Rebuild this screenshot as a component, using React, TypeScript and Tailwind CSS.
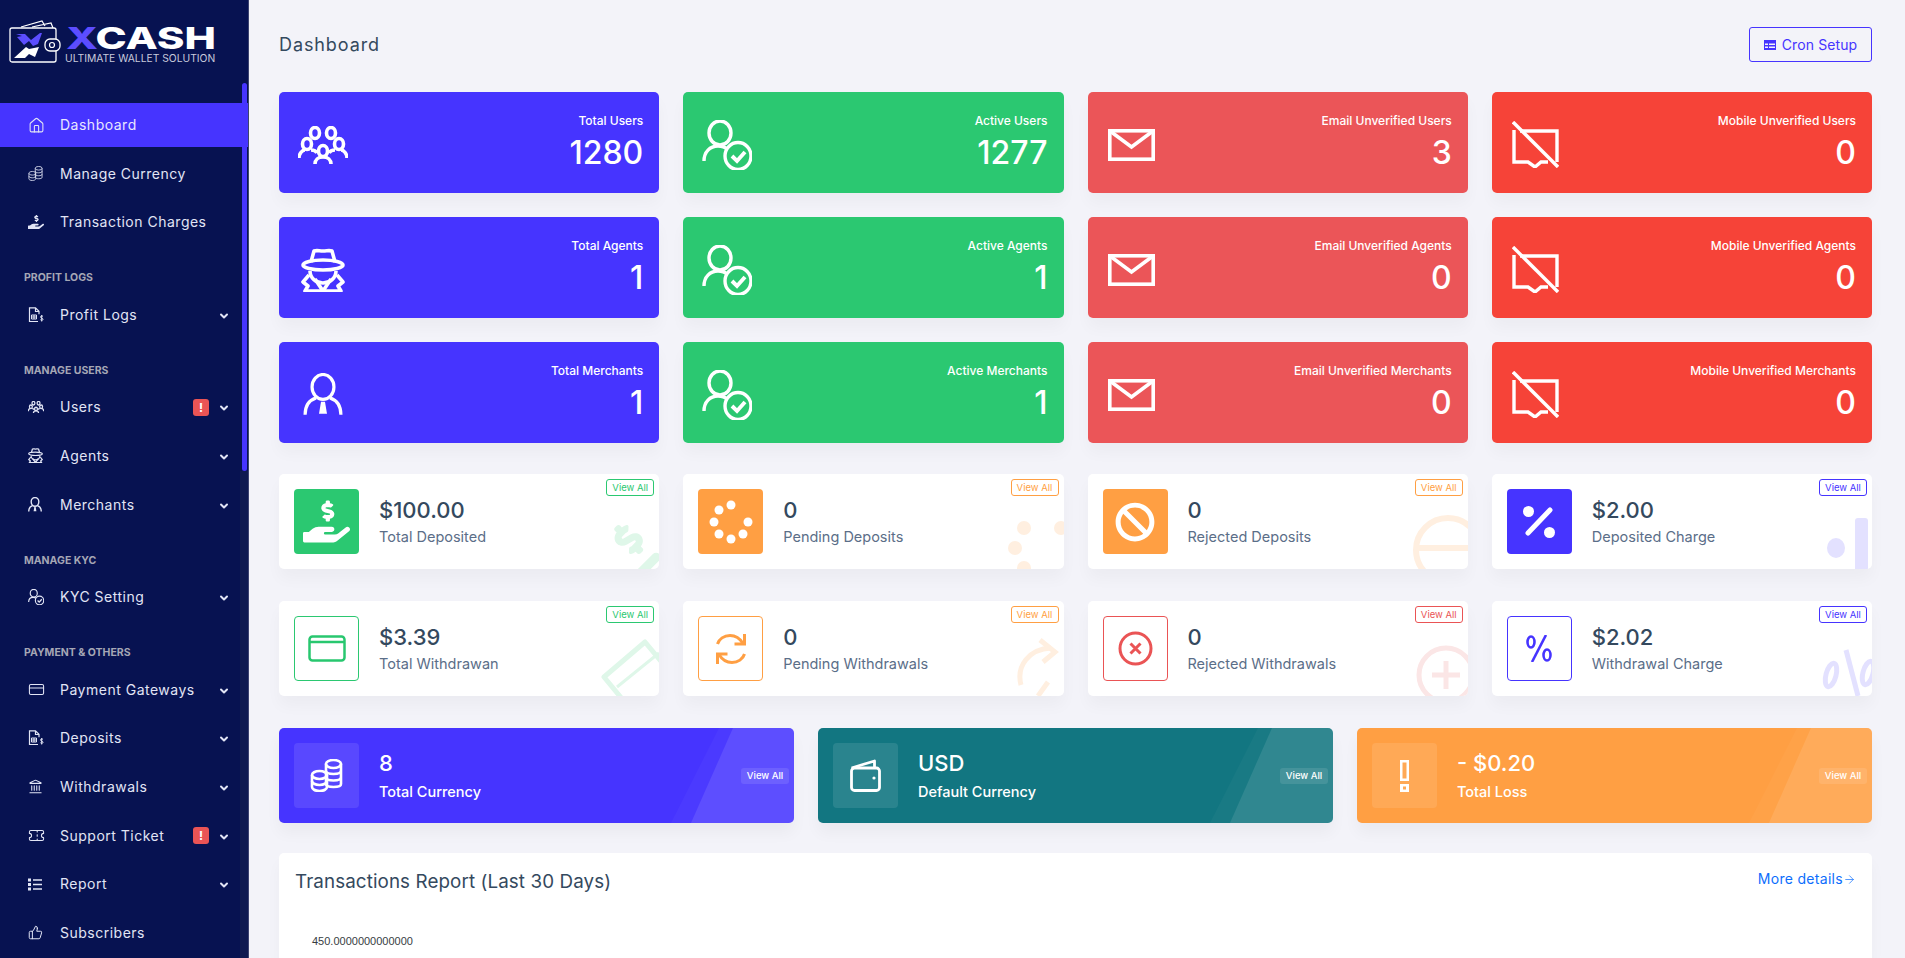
import React from 'react';
import { ChevronDown, CreditCard, House, Landmark, ThumbsUp, Ticket, ArrowRight } from 'lucide-react';
import { FaBan, FaHandHoldingUsd } from 'react-icons/fa';

// Icons drawn by hand, the packages only have solid or differently shaped ones
const GroupIcon = ({ size = 50, sw = 3.6 }: { size?: number; sw?: number }) => (
  <svg width={size} height={size * 0.76} viewBox="0 0 50 38" fill="none" stroke="currentColor" strokeWidth={sw}>
    <ellipse cx="17" cy="7" rx="4.500" ry="5.500" />
    <ellipse cx="33" cy="7" rx="4.500" ry="5.500" />
    <ellipse cx="9" cy="18" rx="4.500" ry="5.500" />
    <ellipse cx="41" cy="18" rx="4.500" ry="5.500" />
    <ellipse cx="25" cy="25" rx="4.500" ry="5.500" />
    <path d="M1 32c0-4 3-8 6-8M49 32c0-4-3-8-6-8M17 38c0-4 3-7 8-7s8 3 8 7M13 24c3 0 5 1 6 3M37 24c-3 0-5 1-6 3" />
  </svg>
);

const UserCheckIcon = ({ size = 50, sw = 3.4 }: { size?: number; sw?: number }) => (
  <svg width={size} height={size} viewBox="0 0 50 50" fill="none" stroke="currentColor" strokeWidth={sw}>
    <ellipse cx="18" cy="13" rx="11" ry="12" />
    <path d="M2 41c0-9 6-15 14-15 4 0 7 1 9 3" />
    <ellipse cx="36" cy="36" rx="13" ry="13.500" />
    <path d="M30 36l5 5 8-9" strokeWidth={sw + 0.5} />
  </svg>
);

const SpyIcon = ({ size = 44, sw = 3.6 }: { size?: number; sw?: number }) => (
  <svg width={size} height={size} viewBox="0 0 44 44" fill="none" stroke="currentColor" strokeWidth={sw} strokeLinejoin="round">
    <path d="M10 14l3-11c3-1 5 0 9 0s6-1 9 0l3 11" />
    <ellipse cx="22" cy="17" rx="20" ry="5" />
    <path d="M9 23c0 7 6 12 13 12s13-5 13-12" />
    <path d="M8 27l-6 7 5 4-3 5h36l-3-5 5-4-6-7" />
    <path d="M14 31l8 12 8-12" />
  </svg>
);

const UserTieIcon = ({ size = 40, sw = 3.2 }: { size?: number; sw?: number }) => (
  <svg width={size} height={size * 1.07} viewBox="0 0 40 43" fill="none" stroke="currentColor" strokeWidth={sw}>
    <ellipse cx="20" cy="14" rx="11" ry="12.500" />
    <path d="M2 42c0-10 5-15 11-17M38 42c0-10-5-15-11-17" />
    <path d="M18 29h4l2 12h-8z" fill="currentColor" stroke="none" />
  </svg>
);

const MailIcon = () => (
  <svg width="47" height="32" viewBox="0 0 47 32" fill="none" stroke="currentColor" strokeWidth="3.600">
    <rect x="1.800" y="1.800" width="43.400" height="28.400" />
    <path d="M2 2l21.500 16L45 2" />
  </svg>
);

const CommentSlashIcon = () => (
  <svg width="47" height="47" viewBox="0 0 47 47" fill="none" stroke="currentColor" strokeWidth="3.400">
    <path d="M1 1l45 45" />
    <path d="M8 10h37v31M2 9v32h14l7 5 6-5h7" />
  </svg>
);

const SpinnerIcon = () => (
  <svg width="44" height="44" viewBox="-22 -22 44 44" fill="white">
    {[[0, -17], [-12, -12], [-17, 0], [-12, 12], [0, 17], [12, 12], [17, 0]].map(([x, y], i) => (
      <circle key={i} cx={x} cy={y} r="4.500" />
    ))}
  </svg>
);

const PercentSolid = () => (
  <svg width="32" height="32" viewBox="0 0 32 32" fill="white">
    <circle cx="5.500" cy="5.500" r="5.500" />
    <circle cx="26.500" cy="26.500" r="5.500" />
    <path d="M27 4L5 27" stroke="white" strokeWidth="5" strokeLinecap="round" />
  </svg>
);

const CardOutline = () => (
  <svg width="38" height="27" viewBox="0 0 38 27" fill="none" stroke="#28c76f" strokeWidth="2.500">
    <rect x="1.500" y="1.500" width="35" height="24" rx="3" />
    <path d="M2 7h34" />
  </svg>
);

const SyncIcon = () => (
  <svg width="30" height="32" viewBox="0 0 30 32" fill="none" stroke="#ff9f43" strokeWidth="3">
    <path d="M1.500 11C3 6 8 2.500 14 2.500s10 3 13 8" />
    <path d="M28.500 1v10h-10" />
    <path d="M28.500 21c-1.500 5-6.500 8.500-12.500 8.500S6 26.500 3 21.500" />
    <path d="M1.500 31V21h10" />
  </svg>
);

const TimesCircle = () => (
  <svg width="35" height="35" viewBox="0 0 35 35" fill="none" stroke="#ea5455" strokeWidth="3">
    <circle cx="17.500" cy="17.500" r="15.500" />
    <path d="M12.500 12.500l10 10M22.500 12.500l-10 10" />
  </svg>
);

const PercentThin = () => (
  <svg width="28" height="27" viewBox="0 0 28 27" fill="none" stroke="#4634ff" strokeWidth="2.600">
    <ellipse cx="6" cy="7" rx="3.500" ry="5.500" />
    <ellipse cx="22" cy="20" rx="3.500" ry="5.500" />
    <path d="M21 0L7 27" />
  </svg>
);

const CoinsIcon = ({ size = 33, sw = 2.6 }: { size?: number; sw?: number }) => (
  <svg width={size} height={size} viewBox="0 0 33 33" fill="none" stroke="currentColor" strokeWidth={sw}>
    <ellipse cx="23.500" cy="5" rx="7.500" ry="4" />
    <path d="M16 5v20c0 2 3 3 7.500 3S31 27 31 25V5M16 11.500c0 2 3 3.500 7.500 3.500s7.500-1.500 7.500-3.500M16 18c0 2 3 3.500 7.500 3.500S31 20 31 18" />
    <path d="M2 16c0-2 3-4 7.500-4s7.500 2 7.500 4v12c0 2-3 4-7.500 4S2 30 2 28z" fill="none" />
    <path d="M2 16c0 2 3 4 7.500 4s7.500-2 7.500-4M2 22c0 2 3 4 7.500 4s7.500-2 7.500-4" />
  </svg>
);

const WalletIcon = () => (
  <svg width="31" height="33" viewBox="0 0 31 33" fill="none" stroke="white" strokeWidth="2.800" strokeLinejoin="round">
    <path d="M1.500 9l23-7v7" />
    <rect x="1.500" y="9" width="28" height="22.500" rx="3" />
    <circle cx="24" cy="19" r="1.600" fill="white" stroke="none" />
  </svg>
);

const LossIcon = () => (
  <svg width="9" height="32" viewBox="0 0 9 32" fill="white">
    <path fillRule="evenodd" d="M0 0h9v21H0zM2.500 2.500v16h4v-16zM0 24h9v8H0zM3 26.500v3h3v-3z" />
  </svg>
);

const TableIcon = () => (
  <svg width="12" height="10" viewBox="0 0 12 10" fill="#4634ff">
    <path fillRule="evenodd" d="M0 0h12v10H0zM1 3.500v1.500h3V3.500zM5 3.500v1.500h6V3.500zM1 6.500V8h3V6.500zM5 6.500V8h6V6.500z" />
  </svg>
);

const FileDollarIcon = () => (
  <svg width="16" height="16" viewBox="0 0 16 16" fill="none" stroke="currentColor" strokeWidth="1.200">
    <path d="M10 14.500H1.500V.8h6l3.500 3.500v3M7.500 1v3.500H11" />
    <path d="M3.500 8h5v4h-5zM3.500 10h5M6 8v4" strokeWidth="1" />
    <path d="M15 9.500c-.5-.7-2.500-.8-2.500.5s2.500 1 2.500 2.300-2 1.300-2.600.4M13.700 8v6.500" strokeWidth="1" />
  </svg>
);

const ListIcon = () => (
  <svg width="14" height="13" viewBox="0 0 14 13" fill="none" stroke="currentColor" strokeWidth="1.300">
    <path d="M5 2h9M5 6.500h9M5 11h9" />
    <path d="M0 .5h3v3H0zM0 5h3v3H0zM0 9.500h3v3H0z" fill="currentColor" stroke="none" />
  </svg>
);

const Logo = () => (
  <div className="flex items-start pl-[9px] pt-[20px]">
    <svg width="52" height="44" viewBox="0 0 52 44" fill="none" className="shrink-0">
      <path d="M12 7L33 1l3 5M23 7l19-4 2 5" stroke="white" strokeWidth="1.200" />
      <rect x="1" y="8" width="46" height="34" rx="2" stroke="white" strokeWidth="1.300" fill="#071251" />
      <rect x="36" y="19" width="15" height="12" rx="5" stroke="white" strokeWidth="1.300" fill="#071251" />
      <circle cx="43" cy="25" r="2.500" stroke="white" strokeWidth="1.200" />
      <path d="M7 14h9l6 6 9-7h2l-4 11-5 2-4-5-5 4-7-8 5-1z" fill="#5c4dff" />
      <path d="M5 38l12-11 3 2 10-2-4 10-6-3-4 4z" fill="white" />
    </svg>
    <div className="ml-[4px] mt-[5px]">
      <div className="ml-[1px] font-['Inter',sans-serif] text-[30px] leading-[27px] font-extrabold text-white origin-left scale-x-[1.40] whitespace-nowrap">
        <span className="text-[#5c4dff]">X</span>CASH
      </div>
      <div className="font-['Inter',sans-serif] text-[10.300px] leading-[12px] text-[#c9cbdc] whitespace-nowrap">
        ULTIMATE WALLET SOLUTION
      </div>
    </div>
  </div>
);

type NavItem = { label: string; icon: React.ReactNode; arrow?: boolean; badge?: boolean; active?: boolean };
type NavGroup = { title?: string; items: NavItem[] };

const navGroups: NavGroup[] = [
  {
    items: [
      { label: 'Dashboard', icon: <House size={17} strokeWidth={1.500} />, active: true },
      { label: 'Manage Currency', icon: <CoinsIcon size={15} sw={1.800} /> },
      { label: 'Transaction Charges', icon: <FaHandHoldingUsd size={16} /> },
    ],
  },
  { title: 'Profit Logs', items: [{ label: 'Profit Logs', icon: <FileDollarIcon />, arrow: true }] },
  {
    title: 'Manage Users',
    items: [
      { label: 'Users', icon: <GroupIcon size={16} sw={4} />, arrow: true, badge: true },
      { label: 'Agents', icon: <SpyIcon size={15} sw={3.600} />, arrow: true },
      { label: 'Merchants', icon: <UserTieIcon size={14} sw={4} />, arrow: true },
    ],
  },
  { title: 'Manage KYC', items: [{ label: 'KYC Setting', icon: <UserCheckIcon size={16} sw={3.600} />, arrow: true }] },
  {
    title: 'Payment & Others',
    items: [
      { label: 'Payment Gateways', icon: <CreditCard size={17} strokeWidth={1.500} />, arrow: true },
      { label: 'Deposits', icon: <FileDollarIcon />, arrow: true },
      { label: 'Withdrawals', icon: <Landmark size={15} strokeWidth={1.700} />, arrow: true },
      { label: 'Support Ticket', icon: <Ticket size={17} strokeWidth={1.500} />, arrow: true, badge: true },
      { label: 'Report', icon: <ListIcon />, arrow: true },
      { label: 'Subscribers', icon: <ThumbsUp size={15} strokeWidth={1.600} /> },
    ],
  },
];

const Sidebar = () => (
  <aside className="relative w-[249px] shrink-0 h-full bg-[#071251] border-r border-[#3d4470] overflow-hidden font-['Inter',sans-serif]">
    {/* sidebar scrollbar track, under the items */}
    <div className="absolute right-0 top-[471px] bottom-0 w-[8px] bg-[#0f1a50]" />
    <div className="relative h-[103px]">
      <Logo />
    </div>
    <div className="relative">
      {navGroups.map((group, gi) => (
        <div key={gi}>
          {group.title && (
            <div className="pt-[22.500px] pb-[7.500px] pl-[24px] text-[10.500px] leading-[14px] font-bold uppercase text-[#a5a7b5]">
              {group.title}
            </div>
          )}
          {group.items.map(item => (
            <div
              key={item.label}
              className={`flex items-center h-[44px] mb-[4.600px] pl-[28px] pr-[18px] text-[14px] tracking-[0.5px] ${
                item.active ? 'bg-[#4634ff] text-[#e8e6ff]' : 'text-[#e2e5f5]'
              }`}
            >
              <span className="w-[32px] flex items-center text-[#e2e5f5]">{item.icon}</span>
              <span className="flex-1 whitespace-nowrap -mt-[1px]">{item.label}</span>
              {item.badge && (
                <span className="w-[16px] h-[17px] mr-[9px] rounded-[3px] bg-[#ea5455] text-white text-[12px] font-bold leading-[17px] text-center tracking-normal">
                  !
                </span>
              )}
              {item.arrow && <ChevronDown size={12} strokeWidth={4} className="mt-[2px] text-[#e2e5f5]" />}
            </div>
          ))}
        </div>
      ))}
    </div>
    <div className="absolute right-[1px] top-[83px] h-[388px] w-[5px] rounded-[3px] bg-[#4634ff]" />
  </aside>
);

const KpiCard = ({ bg, icon, label, value }: { bg: string; icon: React.ReactNode; label: string; value: string }) => (
  <div className={`flex items-center justify-between h-[101px] rounded-[5px] pl-[19px] pr-[16px] text-white shadow-[0_10px_15px_rgba(0,0,0,0.03)] ${bg}`}>
    <div className="w-[50px] flex justify-center mt-[4px]">{icon}</div>
    <div className="text-right">
      <div className="text-[12px] leading-[18px] font-medium">{label}</div>
      <div className="text-[32px] leading-[40px] font-medium mt-[3px]">{value}</div>
    </div>
  </div>
);

const Wm = ({ color, children }: { color: string; children: React.ReactNode }) => (
  <svg width="60" height="60" viewBox="0 0 60 60" fill="none" stroke={color} className="absolute right-0 bottom-0">
    {children}
  </svg>
);

type WidgetProps = {
  value: string;
  label: string;
  box: string;
  btn: string;
  icon: React.ReactNode;
  mark: React.ReactNode;
};

const Widget = ({ value, label, box, btn, icon, mark }: WidgetProps) => (
  <div className="relative flex items-center h-[95px] rounded-[5px] bg-white pl-[15px] overflow-hidden shadow-[0_10px_15px_rgba(0,0,0,0.03)]">
    {mark}
    <div className={`w-[65px] h-[65px] rounded-[4px] flex items-center justify-center shrink-0 ${box}`}>{icon}</div>
    <div className="ml-[20px] relative -mt-[2px]">
      <div className="text-[22px] leading-[30px] font-medium text-[#34495e]">{value}</div>
      <div className="text-[14.500px] leading-[20px] mt-[2px] text-[#5b6e88]">{label}</div>
    </div>
    <span className={`absolute top-[5px] right-[5px] w-[48px] h-[17px] rounded-[3px] border bg-white text-[9.500px] leading-[15px] text-center ${btn}`}>
      View All
    </span>
  </div>
);

const BigCard = ({ bg, icon, value, label }: { bg: string; icon: React.ReactNode; value: string; label: string }) => (
  <div className={`relative flex items-center h-[95px] rounded-[5px] pl-[15px] text-white overflow-hidden shadow-[0_10px_15px_rgba(0,0,0,0.04)] ${bg}`}>
    <div className="absolute inset-0 bg-white/[0.03] [clip-path:polygon(440px_0,100%_0,100%_100%,392px_100%)]" />
    <div className="absolute inset-0 bg-white/10 [clip-path:polygon(454px_0,100%_0,100%_100%,412px_100%)]" />
    <div className="relative w-[65px] h-[65px] rounded-[4px] bg-white/10 flex items-center justify-center shrink-0">{icon}</div>
    <div className="relative ml-[20px] -mt-[2px]">
      <div className="text-[22px] leading-[30px] font-medium">{value}</div>
      <div className="text-[14.500px] leading-[20px] mt-[4px] font-medium">{label}</div>
    </div>
    <span className="absolute top-[40px] right-[5px] w-[48px] h-[16px] rounded-[3px] bg-white/10 text-[9.500px] font-medium leading-[16px] text-center">
      View All
    </span>
  </div>
);

const GREEN = '#dff7e9';
const ORANGE = '#ffefe0';
const RED = '#fbe6e6';
const BLUE = '#e3e1ff';

export default function App() {
  return (
    <div className="flex h-screen overflow-hidden bg-[#f3f3f9] font-['Inter',sans-serif]">
      <Sidebar />
      <main className="flex-1 min-w-0 flex flex-col pl-[30px] pr-[33px]">
        <div className="flex items-center justify-between mt-[27px] mb-[30px] h-[35px]">
          <h1 className="text-[18px] tracking-[0.9px] font-normal text-[#34495e]">Dashboard</h1>
          <button className="flex items-center justify-center gap-[6px] w-[123px] h-[35px] rounded-[3px] border border-[#4634ff] text-[14px] tracking-[0.1px] text-[#4634ff]">
            <TableIcon />
            Cron Setup
          </button>
        </div>

        <div className="grid grid-cols-4 gap-6">
          <KpiCard bg="bg-[#4634ff]" icon={<GroupIcon />} label="Total Users" value="1280" />
          <KpiCard bg="bg-[#2bc871]" icon={<UserCheckIcon />} label="Active Users" value="1277" />
          <KpiCard bg="bg-[#eb5558]" icon={<MailIcon />} label="Email Unverified Users" value="3" />
          <KpiCard bg="bg-[#f64338]" icon={<CommentSlashIcon />} label="Mobile Unverified Users" value="0" />
          <KpiCard bg="bg-[#4634ff]" icon={<SpyIcon />} label="Total Agents" value="1" />
          <KpiCard bg="bg-[#2bc871]" icon={<UserCheckIcon />} label="Active Agents" value="1" />
          <KpiCard bg="bg-[#eb5558]" icon={<MailIcon />} label="Email Unverified Agents" value="0" />
          <KpiCard bg="bg-[#f64338]" icon={<CommentSlashIcon />} label="Mobile Unverified Agents" value="0" />
          <KpiCard bg="bg-[#4634ff]" icon={<UserTieIcon />} label="Total Merchants" value="1" />
          <KpiCard bg="bg-[#2bc871]" icon={<UserCheckIcon />} label="Active Merchants" value="1" />
          <KpiCard bg="bg-[#eb5558]" icon={<MailIcon />} label="Email Unverified Merchants" value="0" />
          <KpiCard bg="bg-[#f64338]" icon={<CommentSlashIcon />} label="Mobile Unverified Merchants" value="0" />
        </div>

        <div className="grid grid-cols-4 gap-x-6 gap-y-8 mt-[31px]">
          <Widget
            value="$100.00"
            label="Total Deposited"
            box="bg-[#2bc871]"
            btn="border-[#2bc871] text-[#2bc871]"
            icon={<FaHandHoldingUsd size={47} color="white" />}
            mark={
              <div className="absolute -right-[22px] -bottom-[26px] -rotate-45 text-[#dff7e9]">
                <FaHandHoldingUsd size={82} />
              </div>
            }
          />
          <Widget
            value="0"
            label="Pending Deposits"
            box="bg-[#ff9f43]"
            btn="border-[#ff9f43] text-[#ff9f43]"
            icon={<SpinnerIcon />}
            mark={
              <Wm color="none">
                <g fill={ORANGE}>
                  <circle cx="20" cy="19" r="7" />
                  <circle cx="11" cy="39" r="7" />
                  <circle cx="20" cy="59" r="7" />
                  <circle cx="57" cy="19" r="7" />
                </g>
              </Wm>
            }
          />
          <Widget
            value="0"
            label="Rejected Deposits"
            box="bg-[#ff9f43]"
            btn="border-[#ff9f43] text-[#ff9f43]"
            icon={<FaBan size={40} color="white" />}
            mark={
              <Wm color={ORANGE}>
                <circle cx="40" cy="41" r="32" strokeWidth="6" />
                <path d="M8 39h52" strokeWidth="6" />
              </Wm>
            }
          />
          <Widget
            value="$2.00"
            label="Deposited Charge"
            box="bg-[#4634ff]"
            btn="border-[#4634ff] text-[#4634ff]"
            icon={<PercentSolid />}
            mark={
              <Wm color="none">
                <g fill={BLUE}>
                  <rect x="43" y="9" width="13" height="60" rx="3" />
                  <ellipse cx="24" cy="39" rx="9" ry="10" />
                </g>
              </Wm>
            }
          />
          <Widget
            value="$3.39"
            label="Total Withdrawan"
            box="border border-[#2bc871]"
            btn="border-[#2bc871] text-[#2bc871]"
            icon={<CardOutline />}
            mark={
              <Wm color={GREEN}>
                <path d="M24 64L5 41 46 6l20 24" strokeWidth="5" strokeLinejoin="round" />
                <path d="M18 51l42-34" strokeWidth="3" />
              </Wm>
            }
          />
          <Widget
            value="0"
            label="Pending Withdrawals"
            box="border border-[#ff9f43]"
            btn="border-[#ff9f43] text-[#ff9f43]"
            icon={<SyncIcon />}
            mark={
              <Wm color={ORANGE}>
                <path d="M17 49C12 30 25 13 47 12" strokeWidth="5" />
                <path d="M36 4l15 12-12 10" strokeWidth="5" />
                <path d="M34 60l10-14" strokeWidth="5" />
              </Wm>
            }
          />
          <Widget
            value="0"
            label="Rejected Withdrawals"
            box="border border-[#ea5455]"
            btn="border-[#ea5455] text-[#ea5455]"
            icon={<TimesCircle />}
            mark={
              <Wm color={RED}>
                <circle cx="38" cy="39" r="27" strokeWidth="5" />
                <path d="M38 25v28M24 39h28" strokeWidth="5" />
              </Wm>
            }
          />
          <Widget
            value="$2.02"
            label="Withdrawal Charge"
            box="border border-[#4634ff]"
            btn="border-[#4634ff] text-[#4634ff]"
            icon={<PercentThin />}
            mark={
              <Wm color={BLUE}>
                <ellipse cx="19" cy="39" rx="5" ry="12" strokeWidth="5" transform="rotate(15 19 39)" />
                <path d="M34 14l12 46" strokeWidth="5" />
                <ellipse cx="56" cy="37" rx="5" ry="12" strokeWidth="5" transform="rotate(15 56 37)" />
              </Wm>
            }
          />
        </div>

        <div className="grid grid-cols-3 gap-6 mt-[32px]">
          <BigCard bg="bg-[#4634ff]" icon={<CoinsIcon />} value="8" label="Total Currency" />
          <BigCard bg="bg-[#127681]" icon={<WalletIcon />} value="USD" label="Default Currency" />
          <BigCard bg="bg-[#ff9f43]" icon={<LossIcon />} value="- $0.20" label="Total Loss" />
        </div>

        <section className="flex-1 mt-[30px] rounded-t-[5px] bg-white px-[16px] pt-[16px] shadow-[0_10px_15px_rgba(0,0,0,0.03)]">
          <div className="flex justify-between items-start">
            <h2 className="text-[18.800px] leading-[26px] text-[#34495e] font-normal tracking-[0.1px]">Transactions Report (Last 30 Days)</h2>
            <a className="flex items-center text-[14px] leading-[20px] tracking-[0.3px] text-[#0d6efd]">
              More details
              <ArrowRight size={13} strokeWidth={1.300} />
            </a>
          </div>
          <div className="ml-[17px] mt-[40px] font-['Liberation_Sans',sans-serif] text-[11px] leading-[13px] text-[#373d3f]">
            450.0000000000000
          </div>
        </section>
      </main>
    </div>
  );
}
